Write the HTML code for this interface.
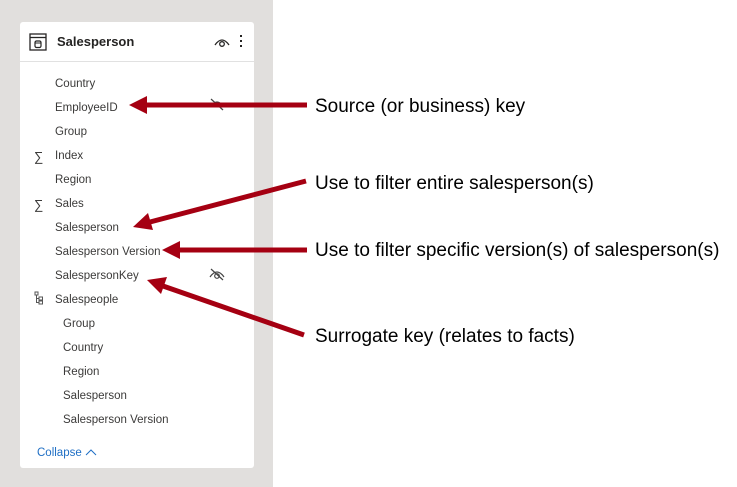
<!DOCTYPE html>
<html><head><meta charset="utf-8"><style>
body{margin:0;width:737px;height:487px;background:#fff;position:relative;overflow:hidden;font-family:"Liberation Sans",Arial,sans-serif}
.bg{position:absolute;left:0;top:0;width:273px;height:487px;background:#e1dfdd}
.card{position:absolute;left:20px;top:22px;width:234px;height:446px;background:#fff;border-radius:3px}
.hdr{position:absolute;left:0;top:0;width:234px;height:39px;border-bottom:1px solid #e1e1e1}
.title{position:absolute;left:37px;top:12px;font-size:13px;font-weight:bold;color:#252423}
.it{position:absolute;font-size:11.5px;color:#3b3a39;margin-top:2px}
.lbl{position:absolute;left:315px;font-size:19px;color:#000;margin-top:2px}
</style></head><body>
<div class="bg"></div>
<div class="card">
<div class="hdr">
<svg style="position:absolute;left:9px;top:11px" width="18" height="18" viewBox="0 0 18 18"><rect x="1" y="1" width="16" height="16" fill="none" stroke="#252423" stroke-width="1.3"/><line x1="1" y1="4.5" x2="17" y2="4.5" stroke="#252423" stroke-width="1.3"/><rect x="6" y="8" width="6" height="6.5" rx="1.5" fill="none" stroke="#252423" stroke-width="1.2"/><line x1="6" y1="10" x2="12" y2="10" stroke="#252423" stroke-width="1"/></svg>
<div class="title">Salesperson</div>
<svg style="position:absolute;left:193px;top:14px" width="18" height="12" viewBox="0 0 18 12"><path d="M2 9 Q9 -1 16 9" fill="none" stroke="#252423" stroke-width="1.3"/><circle cx="9" cy="8" r="2.3" fill="none" stroke="#252423" stroke-width="1.3"/></svg>
<div style="position:absolute;left:220px;top:13px;width:2px;height:2px;background:#252423;box-shadow:0 5px 0 #252423,0 10px 0 #252423"></div>
</div>
</div>
<div class="it" style="left:55px;top:76px">Country</div>
<div class="it" style="left:55px;top:100px">EmployeeID</div>
<div class="it" style="left:55px;top:124px">Group</div>
<div class="it" style="left:34px;top:147px;font-size:13px">∑</div>
<div class="it" style="left:55px;top:148px">Index</div>
<div class="it" style="left:55px;top:172px">Region</div>
<div class="it" style="left:34px;top:195px;font-size:13px">∑</div>
<div class="it" style="left:55px;top:196px">Sales</div>
<div class="it" style="left:55px;top:220px">Salesperson</div>
<div class="it" style="left:55px;top:244px">Salesperson Version</div>
<div class="it" style="left:55px;top:268px">SalespersonKey</div>
<svg style="position:absolute;left:34px;top:291px" width="10" height="14" viewBox="0 0 10 14"><rect x="1" y="1" width="3" height="3" fill="none" stroke="#555" stroke-width="1"/><rect x="5" y="6" width="3.5" height="3" fill="none" stroke="#555"/><rect x="5" y="10" width="3.5" height="3" fill="none" stroke="#555"/><path d="M2.5 4V11.5H5M2.5 7.5H5" fill="none" stroke="#555"/></svg>
<div class="it" style="left:55px;top:292px">Salespeople</div>
<div class="it" style="left:63px;top:316px">Group</div>
<div class="it" style="left:63px;top:340px">Country</div>
<div class="it" style="left:63px;top:364px">Region</div>
<div class="it" style="left:63px;top:388px">Salesperson</div>
<div class="it" style="left:63px;top:412px">Salesperson Version</div>
<div class="it" style="left:37px;top:445px;color:#1f6fc5">Collapse</div>
<svg style="position:absolute;left:85px;top:448px" width="12" height="8" viewBox="0 0 12 8"><path d="M1 7L6 2L11 7" fill="none" stroke="#1f6fc5" stroke-width="1"/></svg>
<svg style="position:absolute;left:208px;top:267px" width="18" height="14" viewBox="0 0 18 14"><path d="M2 10 Q9 0 16 10" fill="none" stroke="#444" stroke-width="1.2"/><circle cx="9" cy="9" r="2.3" fill="none" stroke="#444" stroke-width="1.2"/><line x1="3" y1="2" x2="15" y2="13" stroke="#444" stroke-width="1.2"/></svg>
<svg style="position:absolute;left:208px;top:97px" width="18" height="14" viewBox="0 0 18 14"><path d="M2 10 Q9 0 16 10" fill="none" stroke="#444" stroke-width="1.2"/><line x1="3" y1="2" x2="15" y2="13" stroke="#444" stroke-width="1.2"/></svg>
<svg style="position:absolute;left:0;top:0" width="737" height="487">
<g fill="#a50012" stroke="#a50012" stroke-width="5">
<line x1="307" y1="105" x2="145" y2="105"/>
<polygon points="129,105 147,96 147,114" stroke="none"/>
<line x1="306" y1="181" x2="150" y2="222"/>
<polygon points="133,227 148,213 153,230" stroke="none"/>
<line x1="307" y1="250" x2="178" y2="250"/>
<polygon points="162,250 180,241 180,259" stroke="none"/>
<line x1="304" y1="335" x2="163" y2="286"/>
<polygon points="147,280 167,277 161,294" stroke="none"/>
</g></svg>
<div class="lbl" style="top:94px">Source (or business) key</div>
<div class="lbl" style="top:171px">Use to filter entire salesperson(s)</div>
<div class="lbl" style="top:238px">Use to filter specific version(s) of salesperson(s)</div>
<div class="lbl" style="top:324px">Surrogate key (relates to facts)</div>
</body></html>
